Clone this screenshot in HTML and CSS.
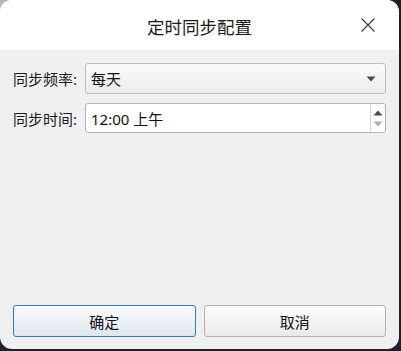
FILE: index.html
```html
<!DOCTYPE html>
<html lang="zh-CN">
<head>
<meta charset="utf-8">
<title>定时同步配置</title>
<link rel="stylesheet" href="styles.css">
</head>
<body>
<div class="window">
  <div class="titlebar">
    <div class="title">定时同步配置</div>
    <div class="close">
      <svg width="16" height="16" viewBox="0 0 16 16"><path d="M1.5 1.5 L14.5 14.5 M14.5 1.5 L1.5 14.5" stroke="#404040" stroke-width="1.3" fill="none"/></svg>
    </div>
  </div>
  <div class="content">
    <div class="form">
      <div class="row">
        <div class="label">同步频率:</div>
        <div class="combo">
          <span class="value">每天</span>
          <svg class="drop" width="10" height="6" viewBox="0 0 10 6"><path d="M0.5 0.5 L9.5 0.5 L5 5.5 Z" fill="#4a4a4a"/></svg>
        </div>
      </div>
      <div class="row">
        <div class="label">同步时间:</div>
        <div class="spin">
          <span class="value">12:00 上午</span>
          <div class="arrows">
            <svg width="10" height="6" viewBox="0 0 10 6"><path d="M0.5 5.5 L9.5 5.5 L5 0.5 Z" fill="#4a4a4a"/></svg>
            <svg width="10" height="6" viewBox="0 0 10 6"><path d="M0.5 0.5 L9.5 0.5 L5 5.5 Z" fill="#b0b0b0"/></svg>
          </div>
        </div>
      </div>
    </div>
    <div class="buttons">
      <button class="btn primary">确定</button>
      <button class="btn">取消</button>
    </div>
  </div>
</div>
</body>
</html>
```
FILE: styles.css
```css
html, body {
  margin: 0;
  padding: 0;
}
body {
  width: 401px;
  height: 351px;
  overflow: hidden;
  background: linear-gradient(135deg, #b9b9b9 0 6%, #1c202b 6% 100%);
  font-family: "Noto Sans", "Noto Sans CJK SC", sans-serif;
  color: #1a1a1a;
}
.window {
  width: 399px;
  height: 349px;
  border-radius: 12px;
  overflow: hidden;
  background: #f0f0f0;
  display: flex;
  flex-direction: column;
}
.titlebar {
  height: 50px;
  background: #ffffff;
  display: flex;
  align-items: center;
  justify-content: center;
  position: relative;
  flex: none;
}
.title {
  font-size: 17.5px;
  color: #1a1a1a;
  margin-top: 2px;
}
.close {
  position: absolute;
  right: 23px;
  top: 17px;
  width: 16px;
  height: 16px;
}
.close svg { display: block; }
.content {
  flex: 1;
  display: flex;
  flex-direction: column;
  justify-content: space-between;
  padding: 13px 13px 12px 13px;
}
.form {
  display: flex;
  flex-direction: column;
  gap: 9px;
}
.row {
  display: flex;
  align-items: center;
}
.label {
  width: 72px;
  font-size: 15px;
  color: #1a1a1a;
}
.value {
  font-size: 15px;
  color: #111;
}
.combo {
  flex: 1;
  height: 29px;
  border: 1px solid #bdbdbd;
  border-radius: 3px;
  background: linear-gradient(#fbfbfb, #ececec);
  display: flex;
  align-items: center;
  justify-content: space-between;
  padding: 0 9px 0 5px;
}
.drop { display: block; margin-top: 1px; }
.spin {
  flex: 1;
  height: 28px;
  border: 1px solid #b5b5b5;
  border-radius: 3px;
  background: #ffffff;
  display: flex;
  align-items: center;
  justify-content: space-between;
  padding-left: 5px;
}
.arrows {
  width: 14px;
  height: 100%;
  border-left: 1px solid #d8d8d8;
  display: flex;
  flex-direction: column;
  align-items: center;
  justify-content: center;
  gap: 5px;
}
.arrows svg { display: block; }
.buttons {
  display: flex;
  gap: 8px;
}
.btn {
  flex: 1;
  height: 32px;
  font-family: "Noto Sans", "Noto Sans CJK SC", sans-serif;
  font-size: 15px;
  color: #111;
  border: 1px solid #b2b2b2;
  border-radius: 3px;
  background: linear-gradient(#fdfdfd, #eaeaea);
  padding: 0;
}
.btn.primary {
  border-color: #3a78ad;
  background: linear-gradient(#fbfcfe, #dde6ef);
}
```
